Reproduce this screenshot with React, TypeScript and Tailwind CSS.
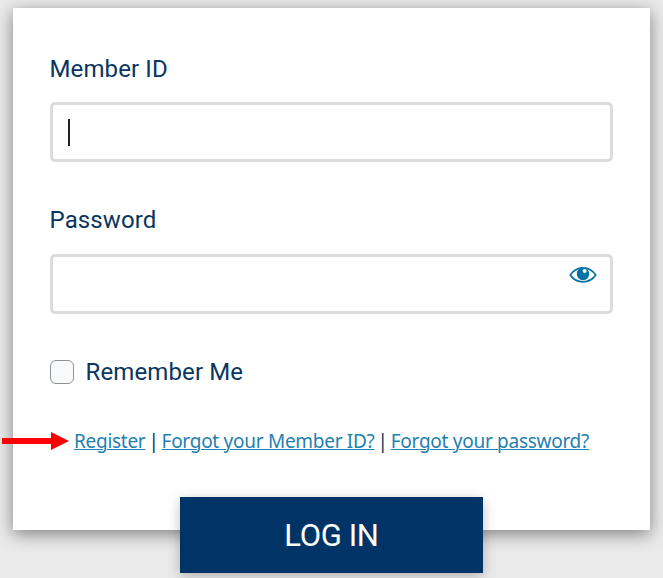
import type { ReactNode } from 'react'
import clsx from 'clsx'

const EyeIcon = () => {
  return (
    <svg width="28" height="18" viewBox="0 0 28 18" fill="none">
      <path d="M1.3 9C7.5-.6 20.5-.6 26.7 9C20.5 18.2 7.5 18.2 1.3 9Z" stroke="#0072a3" strokeWidth="1.7" />
      <circle cx="14" cy="8" r="6.2" fill="#0072a3" />
      <circle cx="15.6" cy="5" r="2" fill="#fff" />
    </svg>
  )
}

const Arrow = () => {
  return (
    <svg className="absolute left-[2px] top-[432px]" width="67" height="18" viewBox="0 0 67 18">
      <path d="M0 6H49V0L67 9L49 18V12H0Z" fill="#ff0000" />
    </svg>
  )
}

type FieldProps = { label: string; labelClass?: string; children?: ReactNode }

const Field = ({ label, labelClass, children }: FieldProps) => {
  return (
    <div>
      <div className={clsx('-ml-[0.5px] h-7 text-2xl tracking-[0.12px]', labelClass)}>{label}</div>
      <div className="mt-5 flex h-[60px] justify-between rounded-[5px] border-3 border-[#dcdcdc] bg-white pl-[15px] pr-[13px]">
        {children}
      </div>
    </div>
  )
}

const TextLink = ({ children }: { children: ReactNode }) => {
  return (
    <a href="#" className="text-[#2480b0] underline decoration-[1.4px] underline-offset-[1px]">
      {children}
    </a>
  )
}

export default function App() {
  return (
    <main className="relative h-[578px] w-[663px] overflow-hidden bg-[#eaeaea] pl-[13px] pt-2 font-['Roboto',sans-serif] text-[#0a3561]">
      <form className="flex h-[522px] w-[637px] flex-col bg-white px-[37px] pt-[46px] shadow-[0_4px_16px_rgba(0,0,0,0.45)]">
        <Field label="Member ID" labelClass="leading-[30px]">
          <span className="mt-[14px] h-[27px] w-[2px] bg-[#222]" />
        </Field>
        <div className="mt-[44px]">
          <Field label="Password" labelClass="leading-7">
            <span className="ml-auto mt-[9px]">
              <EyeIcon />
            </span>
          </Field>
        </div>
        <label className="mt-[44px] flex h-7 items-center text-2xl leading-7 tracking-[0.12px]">
          <span className="mr-[11.5px] h-6 w-6 rounded-md border border-[#8a929a] bg-[#fafafa]" />
          Remember Me
        </label>
        <div className="ml-6 mt-[41px] flex h-7 w-[515px] justify-between whitespace-nowrap font-['Noto_Sans',sans-serif] text-[19px] leading-7 tracking-[-0.28px]">
          <TextLink>Register</TextLink>
          <span>|</span>
          <TextLink>Forgot your Member ID?</TextLink>
          <span>|</span>
          <TextLink>Forgot your password?</TextLink>
        </div>
        <button
          type="button"
          className="ml-[130px] mt-[42px] h-[76px] w-[303px] shrink-0 bg-[#003366] pt-[2px] text-[31px] tracking-[-0.35px] text-white shadow-[0_3px_12px_rgba(0,0,0,0.25)]"
        >
          LOG IN
        </button>
      </form>
      <Arrow />
    </main>
  )
}
